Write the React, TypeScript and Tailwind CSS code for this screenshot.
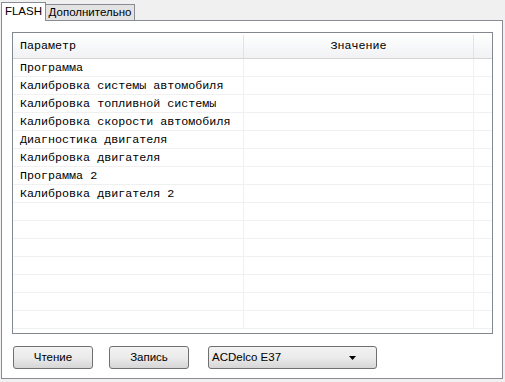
import React from "react";

const rows = [
  "Программа",
  "Калибровка системы автомобиля",
  "Калибровка топливной системы",
  "Калибровка скорости автомобиля",
  "Диагностика двигателя",
  "Калибровка двигателя",
  "Программа 2",
  "Калибровка двигателя 2",
  "", "", "", "", "", "", "",
];

export default function App() {
  return (
    <div className="w-[505px] h-[382px] bg-[#f0f0f0] overflow-hidden" style={{ fontFamily: "'Liberation Sans', Arial, sans-serif" }}>
      <div className="flex h-[20px] items-end pl-[1px]">
        <div className="relative z-10 h-[19px] w-[45px] bg-white border border-b-0 border-[#898c95] text-[11.5px] text-black flex items-center justify-center pb-[1px] mb-[-1px]">
          FLASH
        </div>
        <div className="h-[16px] w-[89px] bg-[#e3e3e3] border border-l-0 border-b-0 border-[#898c95] text-[11.5px] text-black flex items-center justify-center">
          Дополнительно
        </div>
      </div>
      <div className="ml-[1px] w-[502px] h-[359px] bg-white border border-[#898c95] pt-[11px] pl-[10px] flex flex-col">
        <div className="w-[481px] h-[302px] border border-[#828790] flex flex-col overflow-hidden" style={{ fontFamily: "'Liberation Mono', 'Courier New', monospace" }}>
          <div className="flex h-[26px] shrink-0 border-b border-[#d5d5d5] bg-gradient-to-b from-white to-[#f1f2f4] text-[11.7px] text-black pt-[2px]">
            <div className="w-[231px] pl-[7px] flex items-center border-r border-[#e3e3e3]">Параметр</div>
            <div className="w-[230px] flex items-center justify-center border-r border-[#e3e3e3]">Значение</div>
            <div className="flex-1" />
          </div>
          {rows.map((r, i) => (
            <div key={i} className="flex h-[18px] shrink-0 border-b border-[#f0f0f0] text-[11.7px] text-black leading-[18px]">
              <div className="w-[231px] pl-[7px] border-r border-[#f0f0f0] whitespace-nowrap">{r}</div>
              <div className="w-[230px] border-r border-[#f0f0f0]" />
              <div className="flex-1" />
            </div>
          ))}
        </div>
        <div className="flex items-center mt-[12px] text-[11.5px] text-black">
          <button className="ml-[1px] w-[80px] h-[23px] rounded-[3px] border border-[#707070] bg-gradient-to-b from-[#f2f2f2] via-[#ebebeb] to-[#d6d6d6] flex items-center justify-center">
            Чтение
          </button>
          <button className="ml-[16px] w-[80px] h-[23px] rounded-[3px] border border-[#707070] bg-gradient-to-b from-[#f2f2f2] via-[#ebebeb] to-[#d6d6d6] flex items-center justify-center">
            Запись
          </button>
          <div className="ml-[19px] w-[169px] h-[23px] rounded-[3px] border border-[#707070] bg-gradient-to-b from-[#f2f2f2] via-[#ebebeb] to-[#d6d6d6] flex items-center pl-[3px] pr-[20px]">
            <span className="flex-1">ACDelco E37</span>
            <svg width="7" height="4" viewBox="0 0 7 4"><path d="M0 0h7L3.5 4z" fill="#000" /></svg>
          </div>
        </div>
      </div>
    </div>
  );
}
